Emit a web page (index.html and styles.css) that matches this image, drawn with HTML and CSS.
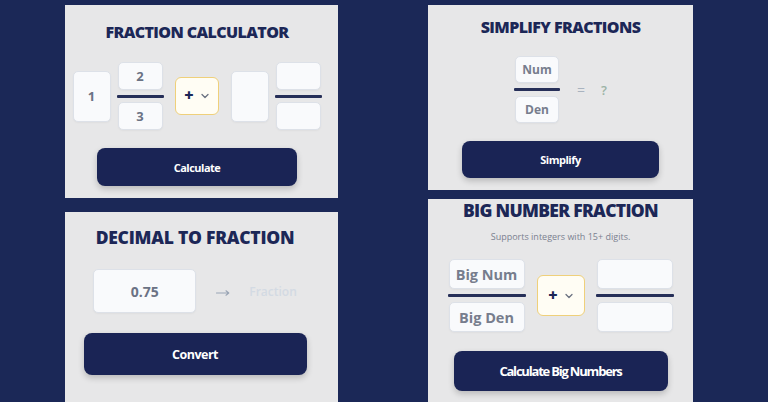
FILE: index.html
```html
<!DOCTYPE html>
<html>
<head>
    <meta charset="utf-8">
    <title>Fraction Tools</title>
    <link rel="stylesheet" href="styles.css">
</head>
<body>
<div class="page">
    <div class="col col-left">
        <section class="card calc">
            <h2 class="title">FRACTION CALCULATOR</h2>
            <div class="calc-row">
                <input class="box whole" type="text" value="1">
                <div class="frac">
                    <input class="box part" type="text" value="2">
                    <span class="bar"></span>
                    <input class="box part" type="text" value="3">
                </div>
                <div class="op">
                    <span class="plus">+</span>
                    <svg class="chev" width="8" height="6" viewBox="0 0 8 6"><path d="M1 1.5 L4 4.5 L7 1.5" fill="none" stroke="#6b7280" stroke-width="1.3" stroke-linecap="round" stroke-linejoin="round"/></svg>
                </div>
                <input class="box whole" type="text">
                <div class="frac">
                    <input class="box part" type="text">
                    <span class="bar"></span>
                    <input class="box part" type="text">
                </div>
            </div>
            <button class="btn btn-calc">Calculate</button>
        </section>
        <section class="card decimal">
            <h2 class="title title-dec">DECIMAL TO FRACTION</h2>
            <div class="dec-row">
                <input class="box dec-input" type="text" value="0.75">
                <svg class="arrow" width="14" height="6" viewBox="0 0 14 6"><path d="M0.5 3 H12.5 M10 0.8 L12.8 3 L10 5.2" fill="none" stroke="#9aa5b5" stroke-width="1.1" stroke-linecap="round" stroke-linejoin="round"/></svg>
                <span class="result">Fraction</span>
            </div>
            <button class="btn btn-convert">Convert</button>
        </section>
    </div>
    <div class="col col-right">
        <section class="card simplify">
            <h2 class="title">SIMPLIFY FRACTIONS</h2>
            <div class="simp-row">
                <div class="frac">
                    <input class="box simp" type="text" placeholder="Num">
                    <span class="bar"></span>
                    <input class="box simp" type="text" placeholder="Den">
                </div>
                <span class="eq">=</span>
                <span class="ans">?</span>
            </div>
            <button class="btn btn-simplify">Simplify</button>
        </section>
        <section class="card big">
            <h2 class="title title-big">BIG NUMBER FRACTION</h2>
            <p class="note">Supports integers with 15+ digits.</p>
            <div class="big-row">
                <div class="frac">
                    <input class="box big-box" type="text" placeholder="Big Num">
                    <span class="bar"></span>
                    <input class="box big-box" type="text" placeholder="Big Den">
                </div>
                <div class="op op-big">
                    <span class="plus">+</span>
                    <svg class="chev" width="8" height="6" viewBox="0 0 8 6"><path d="M1 1.5 L4 4.5 L7 1.5" fill="none" stroke="#6b7280" stroke-width="1.3" stroke-linecap="round" stroke-linejoin="round"/></svg>
                </div>
                <div class="frac">
                    <input class="box big-box" type="text">
                    <span class="bar"></span>
                    <input class="box big-box" type="text">
                </div>
            </div>
            <button class="btn btn-big">Calculate Big Numbers</button>
        </section>
    </div>
</div>
</body>
</html>
```

FILE: styles.css
```css
/* page frame */
body { margin: 0; height: 402px; overflow: hidden; background: #1b2857; font-family: "Open Sans", "Liberation Sans", sans-serif; }
.page { display: flex; gap: 90px; padding: 5px 0 0 65px; height: 402px; box-sizing: border-box; overflow: hidden; }
.col { display: flex; flex-direction: column; }
.col-left { width: 273px; gap: 14px; }
.col-right { width: 265px; gap: 9px; }

/* cards */
.card { background: #e7e7e8; display: flex; flex-direction: column; align-items: center; box-sizing: border-box; flex-shrink: 0; }
.calc { height: 193px; padding: 17px 9px 0 0; }
.simplify { height: 185px; padding-top: 12px; }
.decimal { height: 240px; padding: 15px 13px 0 0; }
.big { height: 240px; padding-top: 1px; }

.title { margin: 0; font-size: 16px; line-height: 20px; font-weight: 800; color: #1c2757; white-space: nowrap; letter-spacing: -0.6px; }
.title-dec { font-size: 17.5px; letter-spacing: -0.25px; }
.title-big { font-size: 17.5px; letter-spacing: -0.7px; }

/* inputs */
.box { box-sizing: border-box; border: 1px solid #dde1e8; background: #f9fafc; border-radius: 5px; text-align: center; font-family: "Open Sans", sans-serif; font-weight: 700; color: #6b7284; padding: 0; outline: none; box-shadow: 0 1px 2px rgba(0,0,0,0.04); }
.box::placeholder { color: #777d8d; }
.frac { display: flex; flex-direction: column; align-items: center; }
.bar { display: block; height: 3px; background: #262f58; border-radius: 1px; }

.calc-row { display: flex; align-items: center; margin-top: 20px; }
.whole { width: 38px; height: 51px; font-size: 13px; margin-right: 6px; }
.part { width: 45px; height: 28px; font-size: 13px; }
.calc-row .bar { width: 47px; margin: 5px 0 4px; }
.calc-row .frac:nth-child(2) { margin-right: 11px; }

.op { box-sizing: border-box; width: 44px; height: 38px; border: 1px solid #efd07a; background: #fffdf4; border-radius: 6px; display: flex; align-items: center; justify-content: center; gap: 7px; margin-right: 12px; }
.plus { font-size: 16px; font-weight: 800; color: #1c2757; line-height: 1; margin-top: -2px; }

/* buttons */
.btn { border: none; background: #1a2455; color: #fff; font-family: "Open Sans", sans-serif; font-weight: 700; border-radius: 8px; box-shadow: 0 3px 6px rgba(0,0,0,0.2); letter-spacing: -0.5px; cursor: pointer; }
.btn-calc { width: 200px; height: 38px; margin-top: 18px; font-size: 11px; }
.btn-simplify { width: 197px; height: 37px; margin-top: 18px; font-size: 11px; }
.btn-convert { width: 223px; height: 42px; margin-top: 20px; font-size: 12.5px; }
.btn-big { width: 214px; height: 40px; margin-top: 19px; font-size: 13px; letter-spacing: -1.2px; }

/* simplify */
.simp-row { display: flex; align-items: center; margin-top: 19px; }
.simp { width: 44px; height: 27px; font-size: 12px; }
.simp-row .bar { width: 46px; margin: 5px 0; }
.eq { margin-left: 17px; color: #a9b3bf; font-size: 14px; }
.ans { margin-left: 16px; color: #9bb3a5; font-size: 13px; font-weight: 600; }

/* decimal */
.dec-row { display: flex; align-items: center; margin-top: 22px; }
.dec-input { width: 103px; height: 44px; font-size: 14px; }
.arrow { margin: 3px 0 0 20px; }
.result { margin-left: 19px; color: #d3dae3; font-size: 12px; font-weight: 600; }

/* big numbers */
.note { margin: 10px 0 0; font-size: 9px; line-height: 14px; color: #7b8190; }
.big-row { display: flex; align-items: center; gap: 11px; margin-top: 15px; }
.big-box { width: 76px; height: 30px; font-size: 14.5px; }
.big-row .bar { width: 78px; margin: 5px 0; }
.op-big { width: 48px; height: 41px; margin-right: 0; }
```
